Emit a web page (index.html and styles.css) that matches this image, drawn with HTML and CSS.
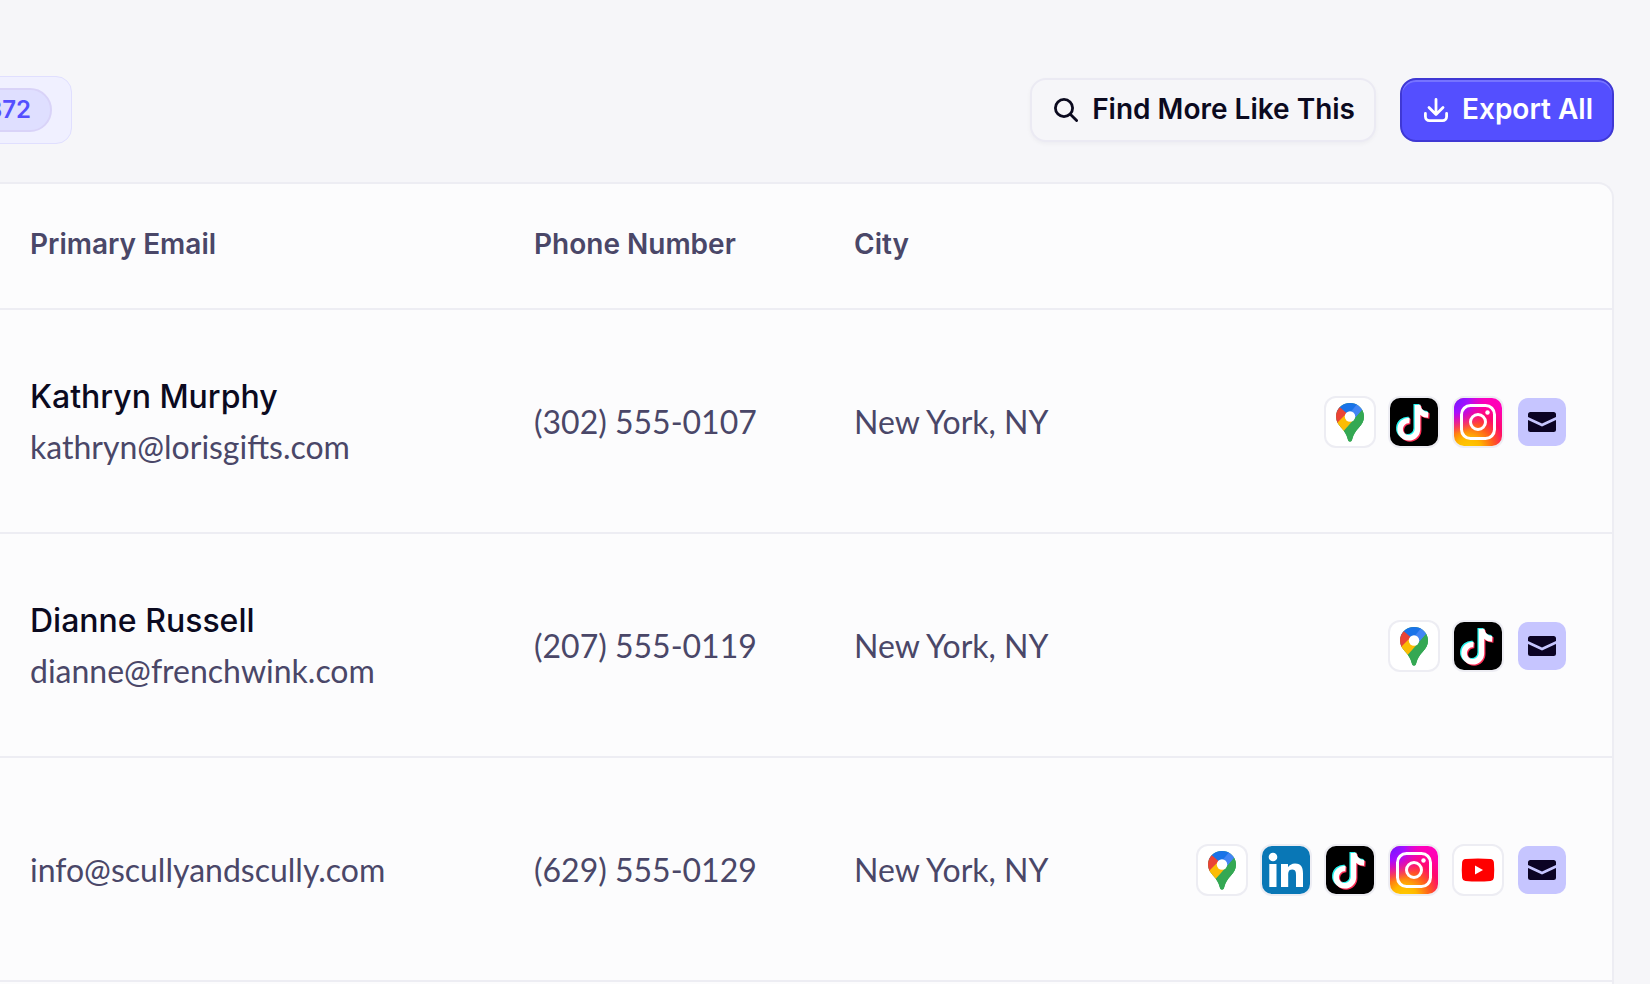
FILE: index.html
```html
<!DOCTYPE html>
<html lang="en">
<head>
    <meta charset="UTF-8">
    <meta name="viewport" content="width=device-width, initial-scale=1.0">
    <title>Leads</title>
    <link rel="stylesheet" href="styles.css">
</head>
<body>
    <!-- shared icons -->
    <svg class="sprite" aria-hidden="true">
        <defs>
            <radialGradient id="ig-warm" cx="0.3" cy="1.1" r="1.1">
                <stop offset="0" stop-color="#ffd000"/>
                <stop offset="0.25" stop-color="#ffb800"/>
                <stop offset="0.5" stop-color="#ff5a1f"/>
                <stop offset="0.72" stop-color="#ff0a6c"/>
                <stop offset="1" stop-color="#ff00b8"/>
            </radialGradient>
            <radialGradient id="ig-cool" cx="0" cy="0" r="0.75">
                <stop offset="0" stop-color="#6a1cff"/>
                <stop offset="0.4" stop-color="#a50fff"/>
                <stop offset="1" stop-color="#ff00c8" stop-opacity="0"/>
            </radialGradient>
            <clipPath id="pin-shape">
                <path d="M24 5c-8 0-14 6-14 13.500 0 4.500 2 7.500 5 11 3.500 4 5.500 7 6.700 11.500.5 2 1.100 2.500 2.300 2.500s1.800-.5 2.300-2.500c1.200-4.500 3.200-7.500 6.700-11.500 3-3.500 5-6.500 5-11C38 11 32 5 24 5z"/>
            </clipPath>
        </defs>
        <symbol id="icon-maps" viewBox="0 0 48 48">
            <g clip-path="url(#pin-shape)">
                <path fill="#34a853" d="M0 0h48v48H0z"/>
                <path fill="#4285f4" d="M20 18 32 0l10 4-4 6-17 20z"/>
                <path fill="#1a73e8" d="M8 5h24L19 21l-9-8z"/>
                <path fill="#ea4335" d="M13 8.500l8 7L10 29H5V12z"/>
                <path fill="#fbbc04" d="M20.500 15.500 28 22 16 36 8 28z"/>
                <path fill="#34a853" d="M37 11 15 36l8 12h16V14z"/>
            </g>
            <circle cx="24" cy="18.500" r="5.200" fill="#fff"/>
        </symbol>
        <symbol id="icon-tiktok" viewBox="0 0 48 48">
            <path fill="#000" d="M0 0h48v48H0z"/>
            <g fill="none" stroke-width="5.500">
                <g stroke="#25f4ee"><path d="M18.500 21.500a8.700 8.700 0 1 0 7.700 8.700V6"/><path d="M26.500 7c1 5 4.500 8.500 11 8.700"/></g>
                <g stroke="#fe2c55"><path d="M20.500 23.500a8.700 8.700 0 1 0 8.200 8.400V8"/><path d="M28.500 9c1 5 4.500 8.700 11 9"/></g>
                <g stroke="#fff"><path d="M19.500 22.500a8.700 8.700 0 1 0 8 8.500V7"/><path d="M27.500 7c1 6 4.500 9.500 10.700 10"/></g>
            </g>
        </symbol>
        <symbol id="icon-instagram" viewBox="0 0 48 48">
            <path fill="url(#ig-warm)" d="M0 0h48v48H0z"/>
            <path fill="url(#ig-cool)" d="M0 0h48v48H0z"/>
            <g fill="none" stroke="#fff" stroke-width="3">
                <rect x="7.500" y="7.500" width="33" height="33" rx="9"/>
                <circle cx="24" cy="24" r="7.500"/>
            </g>
            <circle cx="33.500" cy="14.500" r="2.200" fill="#fff"/>
        </symbol>
        <symbol id="icon-linkedin" viewBox="0 0 48 48">
            <path fill="#0977b6" d="M0 0h48v48H0z"/>
            <g fill="#fff">
                <circle cx="11" cy="11" r="4.300"/>
                <path d="M7.300 18h7.200v23H7.300zM19 18h7v3.200c1.200-2 3.800-3.800 7-3.800 6.700 0 8 4.400 8 10.500V41h-7V29.500c0-2.800 0-6-3.800-6S26.200 26.500 26.200 29.500V41H19z"/>
            </g>
        </symbol>
        <symbol id="icon-youtube" viewBox="0 0 48 48">
            <path fill="#f00" d="M11.500 13.100q12.500-1.200 25 0 3 .3 3.400 3.400.7 7.500 0 15-.4 3.100-3.400 3.400-12.500 1.200-25 0-3-.3-3.400-3.400-.7-7.500 0-15 .4-3.100 3.400-3.400z"/>
            <path fill="#fff" d="M21 19.500v9l8-4.500z"/>
        </symbol>
        <symbol id="icon-mail" viewBox="0 0 48 48">
            <path fill="#0b0324" d="M12.500 14h23a2.500 2.500 0 0 1 2.500 2.500V19l-14 6.500L10 19v-2.500a2.500 2.500 0 0 1 2.500-2.500zM10 22l14 6.500L38 22v9.500a2.500 2.500 0 0 1-2.500 2.500h-23a2.500 2.500 0 0 1-2.500-2.500z"/>
        </symbol>
    </svg>

    <header class="toolbar">
        <div class="tab"><span class="count">372</span></div>
        <div class="actions">
            <button class="btn" type="button">
                <svg class="btn-icon" viewBox="0 0 24 24" fill="none" stroke="currentColor" stroke-width="2.800" stroke-linecap="round"><circle cx="10" cy="10" r="8.600"/><path d="M16.300 16.300 22.600 22.600"/></svg>
                <span class="btn-label">Find More Like This</span>
            </button>
            <button class="btn btn-primary" type="button">
                <svg class="btn-icon" viewBox="0 0 24 24" fill="none" stroke="currentColor" stroke-width="2.800" stroke-linecap="round" stroke-linejoin="round"><path d="M12 1.400V16M5 9.500l7 7 7-7M1.400 15.500v3.100a4 4 0 0 0 4 4h13.200a4 4 0 0 0 4-4v-3.100"/></svg>
                <span class="btn-label">Export All</span>
            </button>
        </div>
    </header>

    <main class="card">
        <table class="leads">
            <colgroup>
                <col class="col-email">
                <col class="col-phone">
                <col class="col-city">
                <col>
            </colgroup>
            <thead>
                <tr>
                    <th>Primary Email</th>
                    <th>Phone Number</th>
                    <th>City</th>
                    <th></th>
                </tr>
            </thead>
            <tbody>
                <tr>
                    <td><div class="name">Kathryn Murphy</div><div>kathryn@lorisgifts.com</div></td>
                    <td>(302) 555-0107</td>
                    <td>New York, NY</td>
                    <td>
                        <div class="links">
                            <a href="#" class="tile" aria-label="Google Maps"><svg><use href="#icon-maps"/></svg></a>
                            <a href="#" class="tile" aria-label="TikTok"><svg><use href="#icon-tiktok"/></svg></a>
                            <a href="#" class="tile" aria-label="Instagram"><svg><use href="#icon-instagram"/></svg></a>
                            <a href="#" class="tile tile-mail" aria-label="Email"><svg><use href="#icon-mail"/></svg></a>
                        </div>
                    </td>
                </tr>
                <tr>
                    <td><div class="name">Dianne Russell</div><div>dianne@frenchwink.com</div></td>
                    <td>(207) 555-0119</td>
                    <td>New York, NY</td>
                    <td>
                        <div class="links">
                            <a href="#" class="tile" aria-label="Google Maps"><svg><use href="#icon-maps"/></svg></a>
                            <a href="#" class="tile" aria-label="TikTok"><svg><use href="#icon-tiktok"/></svg></a>
                            <a href="#" class="tile tile-mail" aria-label="Email"><svg><use href="#icon-mail"/></svg></a>
                        </div>
                    </td>
                </tr>
                <tr>
                    <td>info@scullyandscully.com</td>
                    <td>(629) 555-0129</td>
                    <td>New York, NY</td>
                    <td>
                        <div class="links">
                            <a href="#" class="tile" aria-label="Google Maps"><svg><use href="#icon-maps"/></svg></a>
                            <a href="#" class="tile" aria-label="LinkedIn"><svg><use href="#icon-linkedin"/></svg></a>
                            <a href="#" class="tile" aria-label="TikTok"><svg><use href="#icon-tiktok"/></svg></a>
                            <a href="#" class="tile" aria-label="Instagram"><svg><use href="#icon-instagram"/></svg></a>
                            <a href="#" class="tile" aria-label="YouTube"><svg><use href="#icon-youtube"/></svg></a>
                            <a href="#" class="tile tile-mail" aria-label="Email"><svg><use href="#icon-mail"/></svg></a>
                        </div>
                    </td>
                </tr>
            </tbody>
        </table>
    </main>
</body>
</html>
```
FILE: styles.css
```css
* {
    box-sizing: border-box;
}
body {
    margin: 0;
    min-height: 100vh;
    display: flex;
    flex-direction: column;
    padding-right: 36px;
    background: #f6f6f9;
    color: #4a4768;
    font-family: Lato, sans-serif;
    font-size: 32px;
    line-height: 50px;
    overflow-x: hidden;
}
.sprite {
    position: absolute;
    width: 0;
    height: 0;
}
.toolbar {
    display: flex;
    align-items: center;
    justify-content: space-between;
    padding: 76px 0 38px;
}
.tab {
    margin-left: -35px;
    padding: 11px 19px 11px 0;
    border: 1px solid #e0dfff;
    border-radius: 16px;
    background: #f0f0ff;
}
.count {
    display: block;
    padding: 0 19px;
    border: 2px solid #d9d3f8;
    border-radius: 22px;
    background: #dfdfff;
    color: #544fff;
    font: 600 24px/40px Inter, sans-serif;
}
.actions {
    display: flex;
    gap: 24px;
}
.btn {
    display: flex;
    align-items: center;
    gap: 14px;
    height: 64px;
    padding: 0 19px 0 22px;
    border: 2px solid #ebeaf3;
    border-radius: 16px;
    background: #f6f6f9;
    color: #0b0a1f;
    font: 600 28px/40px Inter, sans-serif;
    box-shadow: 0 2px 4px rgba(20, 20, 60, 0.04);
    cursor: pointer;
}
.btn-primary {
    border-color: #3f38d4;
    background: #544fff;
    color: #fff;
    box-shadow: inset 0 2px 0 #7673ff;
}
.btn-icon {
    width: 24px;
    height: 24px;
}
.btn-label {
    padding-bottom: 3px;
}
.card {
    flex: 1;
    border: 2px solid #ededf3;
    border-width: 2px 2px 0 0;
    border-top-right-radius: 16px;
    background: #fcfcfd;
}
.leads {
    width: 100%;
    table-layout: fixed;
    border-collapse: separate;
    border-spacing: 0;
}
.col-email {
    width: 504px;
}
.col-phone,
.col-city {
    width: 320px;
}
.leads th,
.leads td {
    padding: 2px 0 0 30px;
    border-bottom: 2px solid #ededf3;
    text-align: left;
    vertical-align: middle;
}
.leads th {
    height: 126px;
    padding: 0 0 4px 30px;
    font: 600 28px/40px Inter, sans-serif;
}
.leads td {
    height: 224px;
}
.name {
    color: #0b0a1f;
    font-family: Inter, sans-serif;
    font-weight: 500;
}
.links {
    display: flex;
    justify-content: flex-end;
    gap: 16px;
    padding-right: 46px;
}
.tile {
    width: 48px;
    height: 48px;
    border-radius: 10px;
    background: #fff;
    box-shadow: 0 0 0 2px #ededf3;
    overflow: hidden;
}
.tile svg {
    display: block;
    width: 48px;
    height: 48px;
}
.tile-mail {
    background: #c6c5ff;
    box-shadow: none;
}
```
